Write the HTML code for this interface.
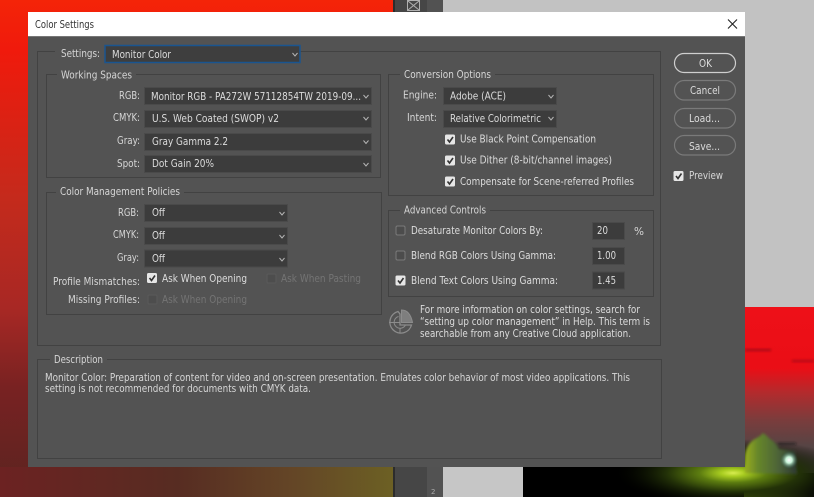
<!DOCTYPE html>
<html><head><meta charset="utf-8"><title>Color Settings</title>
<style>
html,body{margin:0;padding:0;background:#333;width:814px;height:497px;overflow:hidden}
svg{display:block}
text{font-family:"DejaVu Sans",sans-serif;font-size:10.8px;fill:#d6d6d6}
.g{fill:none;stroke:#424242;stroke-width:1}
.l{fill:#dcdcdc}
.d{fill:#747474}
.s{fill:#3c3c3c;stroke:#4a4a4a;stroke-width:1}
.a{fill:none;stroke:#b5b5b5;stroke-width:1}
.b{fill:none;stroke:#7a7a7a;stroke-width:1.2}
</style></head><body>
<svg xmlns="http://www.w3.org/2000/svg" width="814" height="497" viewBox="0 0 814 497">
<defs>
<linearGradient id="lf" x1="0" y1="0" x2="0" y2="1">
<stop offset="0" stop-color="#f42408"/><stop offset=".1" stop-color="#f01a0c"/><stop offset=".4" stop-color="#c42a1c"/><stop offset=".62" stop-color="#a82824"/><stop offset=".78" stop-color="#782222"/><stop offset="1" stop-color="#5a2420"/>
</linearGradient>
<linearGradient id="bt" x1="0" y1="0" x2="1" y2="0">
<stop offset="0" stop-color="#6c2222"/><stop offset=".45" stop-color="#572c22"/><stop offset=".75" stop-color="#644626"/><stop offset="1" stop-color="#6c6024"/>
</linearGradient>
<linearGradient id="rt" x1="0" y1="0" x2="0" y2="1">
<stop offset="0" stop-color="#ee1018"/><stop offset=".36" stop-color="#ea0e16"/><stop offset=".5" stop-color="#b42a2c"/><stop offset=".66" stop-color="#7c3c3c"/><stop offset=".82" stop-color="#564444"/><stop offset="1" stop-color="#3e3e38"/>
</linearGradient>
<linearGradient id="car" x1="0" y1="0" x2="1" y2="0">
<stop offset="0" stop-color="#98ac20"/><stop offset=".25" stop-color="#66862a"/><stop offset=".65" stop-color="#4c6238"/><stop offset="1" stop-color="#2c3830"/>
</linearGradient>
<linearGradient id="road" x1="0" y1="0" x2="1" y2="0">
<stop offset="0" stop-color="#587410"/><stop offset=".6" stop-color="#2a380e"/><stop offset="1" stop-color="#0a0d06"/>
</linearGradient>
<radialGradient id="gl" cx=".5" cy=".5" r=".5">
<stop offset="0" stop-color="#d8ec50"/><stop offset=".1" stop-color="#a8cc20"/><stop offset=".28" stop-color="#5c7c10"/><stop offset=".55" stop-color="#233208"/><stop offset="1" stop-color="#000" stop-opacity="0"/>
</radialGradient>
<radialGradient id="wl" cx=".5" cy=".5" r=".5">
<stop offset="0" stop-color="#fff"/><stop offset=".35" stop-color="#c8f4d8"/><stop offset="1" stop-color="#2a5a4a" stop-opacity="0"/>
</radialGradient>
<filter id="bl"><feGaussianBlur stdDeviation="1.2"/></filter>
</defs>

<!-- backdrop -->
<rect width="393" height="497" fill="url(#lf)"/>
<rect y="467" width="393" height="30" fill="url(#bt)"/>
<rect x="393" width="50" height="497" fill="#464646"/>
<rect x="393" width="2" height="497" fill="#2c2c2c"/>
<rect x="427" width="16" height="497" fill="#525252"/>
<rect x="443" width="371" height="307" fill="#c2c2c2"/>
<rect x="523" y="467" width="291" height="30" fill="#000"/>
<rect x="744" y="307" width="70" height="170" fill="url(#rt)"/>
<g filter="url(#bl)" opacity=".7"><rect x="745" y="349" width="26" height="2" fill="#801018"/><rect x="792" y="360" width="22" height="2" fill="#901018"/></g>
<rect x="744" y="473" width="70" height="24" fill="url(#road)"/>
<ellipse cx="733" cy="473" rx="120" ry="34" fill="url(#gl)"/>
<g filter="url(#bl)">
<path d="M745 473V455Q747 443 755 439L760 436L763 433L767 436L770 439Q776 442 779 449L795 451L797 474Z" fill="url(#car)"/>
<rect x="778" y="443" width="18" height="1.500" fill="#1c1c1c"/>
</g>
<circle cx="789" cy="460" r="9" fill="url(#wl)"/>
<rect x="443" y="467" width="80" height="30" fill="#c6c6c6"/>
<rect x="407.500" y=".5" width="12" height="10" fill="none" stroke="#b0b0b0"/>
<path d="M408 1L419 10M419 1L408 10" stroke="#b0b0b0" fill="none"/>
<text x="431" y="494" style="font-size:7px;fill:#aaa">2</text>

<!-- dialog -->
<rect x="28" y="12" width="717" height="455" fill="#535353"/>
<rect x="28" y="12" width="717" height="24.500" fill="#fff"/>
<rect x="28" y="36" width="717" height="1" fill="#777"/>
<text x="35" y="28" textLength="59" lengthAdjust="spacingAndGlyphs" style="fill:#333">Color Settings</text>
<path d="M728 19.500L737 28.500M737 19.500L728 28.500" stroke="#222" stroke-width="1.100" fill="none"/>

<!-- group frames -->
<path class="g" d="M55 51.500H37.500V345.500H660.500V51.500H300"/>
<path class="g" d="M57 74.500H46.500V177.500H380.500V74.500H136"/>
<path class="g" d="M56 192.500H46.500V314.500H381.500V192.500H184"/>
<path class="g" d="M400 74.500H388.500V195.500H653.500V74.500H495"/>
<path class="g" d="M400 210.500H388.500V296.500H653.500V210.500H490"/>
<path class="g" d="M50 359.500H37.500V458.500H661.500V359.500H107"/>

<!-- settings -->
<text x="61" y="57" textLength="39" lengthAdjust="spacingAndGlyphs">Settings:</text>
<rect x="105" y="45.500" width="195" height="17" fill="#3e3e3e" stroke="#1a5590" stroke-width="1.500"/>
<text class="l" x="112" y="58" textLength="59" lengthAdjust="spacingAndGlyphs">Monitor Color</text>
<path class="a" d="M292.500 53L295 56L297.500 53"/>

<!-- working spaces -->
<text x="61" y="78.500" textLength="71" lengthAdjust="spacingAndGlyphs">Working Spaces</text>
<text x="119" y="99" textLength="21" lengthAdjust="spacingAndGlyphs">RGB:</text>
<text x="113" y="121" textLength="27" lengthAdjust="spacingAndGlyphs">CMYK:</text>
<text x="117" y="144" textLength="23" lengthAdjust="spacingAndGlyphs">Gray:</text>
<text x="117" y="167" textLength="23" lengthAdjust="spacingAndGlyphs">Spot:</text>
<rect class="s" x="144.500" y="87.500" width="227" height="17"/>
<rect class="s" x="144.500" y="110.500" width="227" height="17"/>
<rect class="s" x="144.500" y="133.500" width="227" height="17"/>
<rect class="s" x="144.500" y="155.500" width="227" height="17"/>
<text class="l" x="151" y="100" textLength="210" lengthAdjust="spacingAndGlyphs">Monitor RGB - PA272W 57112854TW 2019-09...</text>
<text class="l" x="152" y="122" textLength="127" lengthAdjust="spacingAndGlyphs">U.S. Web Coated (SWOP) v2</text>
<text class="l" x="152" y="145" textLength="76" lengthAdjust="spacingAndGlyphs">Gray Gamma 2.2</text>
<text class="l" x="152" y="167" textLength="62" lengthAdjust="spacingAndGlyphs">Dot Gain 20%</text>
<path class="a" d="M363.500 95L366 98L368.500 95M363.500 117L366 120L368.500 117M363.500 140.500L366 143.500L368.500 140.500M363.500 163L366 166L368.500 163"/>

<!-- policies -->
<text x="60" y="195" textLength="120" lengthAdjust="spacingAndGlyphs">Color Management Policies</text>
<text x="118" y="216" textLength="21" lengthAdjust="spacingAndGlyphs">RGB:</text>
<text x="113" y="238" textLength="26" lengthAdjust="spacingAndGlyphs">CMYK:</text>
<text x="117" y="261" textLength="22" lengthAdjust="spacingAndGlyphs">Gray:</text>
<rect class="s" x="144.500" y="204.500" width="143" height="17"/>
<rect class="s" x="144.500" y="227.500" width="143" height="17"/>
<rect class="s" x="144.500" y="250" width="143" height="17"/>
<text class="l" x="152" y="216" textLength="13" lengthAdjust="spacingAndGlyphs">Off</text>
<text class="l" x="152" y="239" textLength="13" lengthAdjust="spacingAndGlyphs">Off</text>
<text class="l" x="152" y="262" textLength="13" lengthAdjust="spacingAndGlyphs">Off</text>
<path class="a" d="M279.500 212L282 215L284.500 212M279.500 235L282 238L284.500 235M279.500 258L282 261L284.500 258"/>
<text x="53" y="285" textLength="87" lengthAdjust="spacingAndGlyphs">Profile Mismatches:</text>
<text x="68" y="303" textLength="72" lengthAdjust="spacingAndGlyphs">Missing Profiles:</text>
<rect x="147" y="273" width="10" height="10" rx="1.500" fill="#e6e6e6"/>
<path d="M149.500 278L151.500 280.500L155 275.500" fill="none" stroke="#333" stroke-width="1.600"/>
<text class="l" x="162" y="282" textLength="85" lengthAdjust="spacingAndGlyphs">Ask When Opening</text>
<rect x="267" y="274" width="9" height="9" rx="1" fill="#4d4d4d" stroke="#5a5a5a"/>
<text class="d" x="281" y="282" textLength="80" lengthAdjust="spacingAndGlyphs">Ask When Pasting</text>
<rect x="148" y="295" width="9" height="9" rx="1" fill="#4d4d4d" stroke="#5a5a5a"/>
<text class="d" x="162" y="303" textLength="85" lengthAdjust="spacingAndGlyphs">Ask When Opening</text>

<!-- conversion -->
<text x="404" y="78" textLength="87" lengthAdjust="spacingAndGlyphs">Conversion Options</text>
<text x="403" y="98.500" textLength="34" lengthAdjust="spacingAndGlyphs">Engine:</text>
<text x="407" y="121" textLength="30" lengthAdjust="spacingAndGlyphs">Intent:</text>
<rect class="s" x="443.500" y="87.500" width="113" height="17"/>
<rect class="s" x="443.500" y="110.500" width="113" height="17"/>
<text class="l" x="450" y="99.500" textLength="56" lengthAdjust="spacingAndGlyphs">Adobe (ACE)</text>
<text class="l" x="450" y="122" textLength="91" lengthAdjust="spacingAndGlyphs">Relative Colorimetric</text>
<path class="a" d="M548.500 95L551 98L553.500 95M548.500 117L551 120L553.500 117"/>
<g>
<rect x="445" y="134.500" width="10" height="10" rx="1.500" fill="#e6e6e6"/>
<path d="M447.500 139.500L449.500 142L453 137" fill="none" stroke="#333" stroke-width="1.600"/>
<rect x="445" y="155.500" width="10" height="10" rx="1.500" fill="#e6e6e6"/>
<path d="M447.500 160.500L449.500 163L453 158" fill="none" stroke="#333" stroke-width="1.600"/>
<rect x="445" y="176.500" width="10" height="10" rx="1.500" fill="#e6e6e6"/>
<path d="M447.500 181.500L449.500 184L453 179" fill="none" stroke="#333" stroke-width="1.600"/>
</g>
<text class="l" x="460" y="142.500" textLength="136" lengthAdjust="spacingAndGlyphs">Use Black Point Compensation</text>
<text class="l" x="460" y="163.500" textLength="152" lengthAdjust="spacingAndGlyphs">Use Dither (8-bit/channel images)</text>
<text class="l" x="460" y="185" textLength="174" lengthAdjust="spacingAndGlyphs">Compensate for Scene-referred Profiles</text>

<!-- advanced -->
<text x="404" y="213.500" textLength="82" lengthAdjust="spacingAndGlyphs">Advanced Controls</text>
<rect x="396" y="226" width="9" height="9" rx="1.500" fill="#4c4c4c" stroke="#7a7a7a"/>
<rect x="396" y="251" width="9" height="9" rx="1.500" fill="#4c4c4c" stroke="#7a7a7a"/>
<rect x="395.500" y="275.500" width="10" height="10" rx="1.500" fill="#e6e6e6"/>
<path d="M398 280.500L400 283L403.500 278" fill="none" stroke="#333" stroke-width="1.600"/>
<text class="l" x="411" y="234" textLength="132" lengthAdjust="spacingAndGlyphs">Desaturate Monitor Colors By:</text>
<text class="l" x="411" y="259" textLength="145" lengthAdjust="spacingAndGlyphs">Blend RGB Colors Using Gamma:</text>
<text class="l" x="411" y="284" textLength="147" lengthAdjust="spacingAndGlyphs">Blend Text Colors Using Gamma:</text>
<rect class="s" x="592.500" y="222.500" width="32" height="17"/>
<rect class="s" x="592.500" y="247.500" width="32" height="17"/>
<rect class="s" x="592.500" y="272" width="32" height="17"/>
<text class="l" x="597" y="234" textLength="11" lengthAdjust="spacingAndGlyphs">20</text>
<text class="l" x="597" y="259" textLength="19" lengthAdjust="spacingAndGlyphs">1.00</text>
<text class="l" x="597" y="284" textLength="19" lengthAdjust="spacingAndGlyphs">1.45</text>
<text x="634" y="235" textLength="10" lengthAdjust="spacingAndGlyphs">%</text>

<!-- info -->
<g fill="none" stroke="#8c8c8c">
<path stroke-width="1.300" d="M398 311.500A11 11 0 1 0 411.500 325H400V314Z"/>
<path stroke-width="1" d="M398.500 316.500A6 6 0 1 0 405.500 325M400 328V333"/>
<path stroke-width="1" d="M401.500 322.500V310Q410 310 412.500 322.500Z" fill="#7e7e7e"/>
<path stroke-width="1" d="M389 322.500H400"/>
</g>
<text class="l" x="420" y="313" textLength="220" lengthAdjust="spacingAndGlyphs">For more information on color settings, search for</text>
<text class="l" x="420" y="325" textLength="230" lengthAdjust="spacingAndGlyphs">“setting up color management” in Help. This term is</text>
<text class="l" x="420" y="337" textLength="211" lengthAdjust="spacingAndGlyphs">searchable from any Creative Cloud application.</text>

<!-- description -->
<text x="54" y="363" textLength="49" lengthAdjust="spacingAndGlyphs">Description</text>
<text x="45" y="381" textLength="585" lengthAdjust="spacingAndGlyphs">Monitor Color:  Preparation of content for video and on-screen presentation. Emulates color behavior of most video applications. This</text>
<text x="45" y="392" textLength="266" lengthAdjust="spacingAndGlyphs">setting is not recommended for documents with CMYK data.</text>

<!-- buttons -->
<rect x="674.500" y="53.500" width="61" height="19" rx="9.500" fill="none" stroke="#cfcfcf" stroke-width="1.200"/>
<rect class="b" x="674.500" y="80.500" width="61" height="19.500" rx="9.700"/>
<rect class="b" x="674.500" y="108.500" width="61" height="19.500" rx="9.700"/>
<rect class="b" x="674.500" y="135.500" width="61" height="19.500" rx="9.700"/>
<text class="l" x="699" y="67" textLength="13" lengthAdjust="spacingAndGlyphs">OK</text>
<text class="l" x="690" y="94" textLength="30" lengthAdjust="spacingAndGlyphs">Cancel</text>
<text class="l" x="689" y="122" textLength="31" lengthAdjust="spacingAndGlyphs">Load...</text>
<text class="l" x="689" y="150" textLength="31" lengthAdjust="spacingAndGlyphs">Save...</text>
<rect x="673.500" y="171" width="10" height="10" rx="1.500" fill="#e6e6e6"/>
<path d="M676 176L678 178.500L681.500 173.500" fill="none" stroke="#333" stroke-width="1.600"/>
<text x="689" y="179" textLength="34" lengthAdjust="spacingAndGlyphs">Preview</text>
</svg>
</body></html>
